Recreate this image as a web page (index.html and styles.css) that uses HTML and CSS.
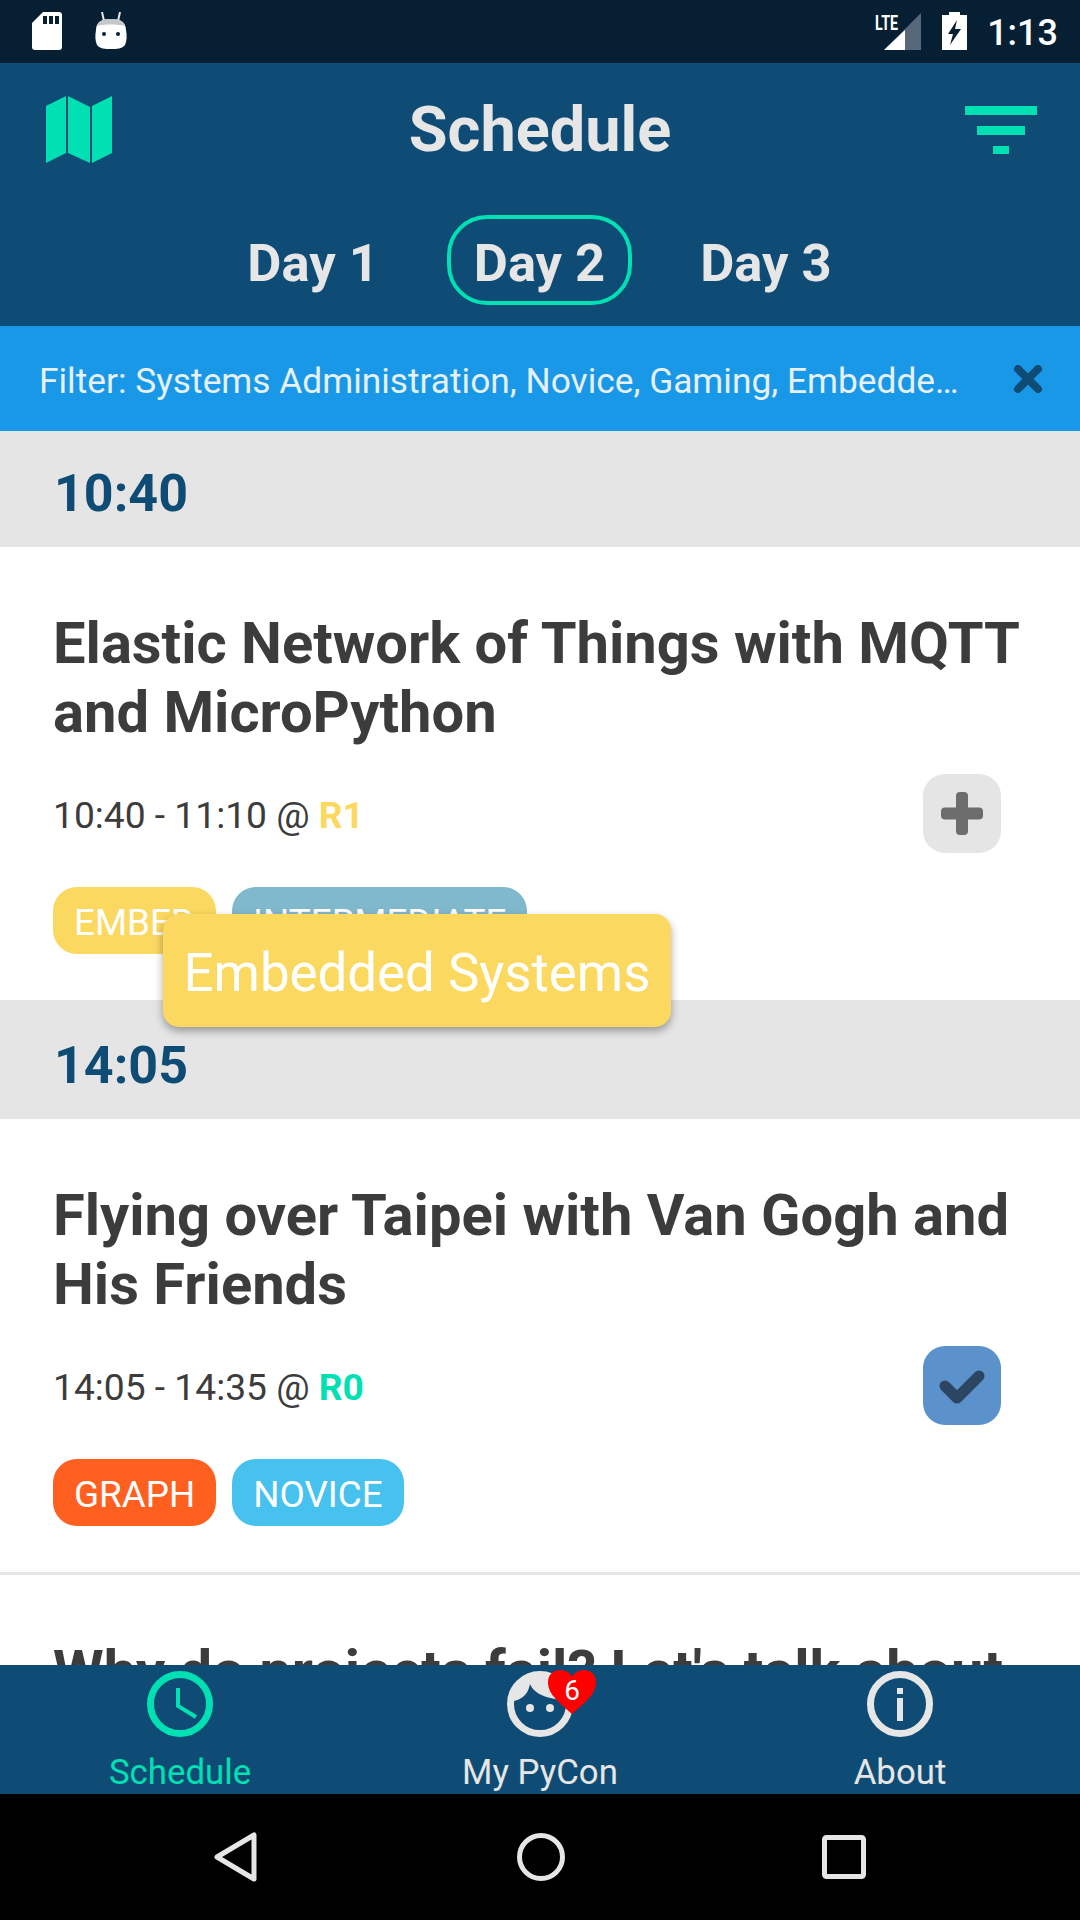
FILE: index.html
```html
<!DOCTYPE html>
<html lang="en">
<head>
    <meta charset="UTF-8">
    <meta name="viewport" content="width=device-width, initial-scale=1.0">
    <title>Schedule</title>
    <link rel="stylesheet" href="styles.css">
</head>
<body>
    <div class="screen">
        <div class="status-bar">
            <div class="status-left">
                <svg class="sd-icon" width="30" height="38" viewBox="0 0 30 38">
                    <path d="M11 0H27a3 3 0 0 1 3 3V35a3 3 0 0 1-3 3H3a3 3 0 0 1-3-3V11Z" fill="#fff"/>
                    <rect x="11" y="4" width="4" height="8" fill="#071f33"/>
                    <rect x="17" y="4" width="4" height="8" fill="#071f33"/>
                    <rect x="23" y="4" width="4" height="8" fill="#071f33"/>
                </svg>
                <svg class="android-icon" width="32" height="38" viewBox="0 0 32 38">
                    <path d="M7 0 9 9M25 0 23 9" stroke="#e8e8e8" stroke-width="2" fill="none"/>
                    <path d="M1 18C1 10 7 7 16 7S31 10 31 18C32 24 32 28 30 33 27 37 22 37 16 37S5 37 2 33C0 28 0 24 1 18Z" fill="#fff"/>
                    <path d="M2 14C3 9 8 7 16 7S29 9 30 14C24 12 8 12 2 14Z" fill="#c3c8cc"/>
                    <circle cx="9" cy="22" r="2" fill="#071f33"/>
                    <circle cx="23" cy="22" r="2" fill="#071f33"/>
                </svg>
            </div>
            <div class="status-right">
                <svg class="signal-icon" width="47" height="38" viewBox="0 0 47 38">
                    <path d="M47 1V38H10Z" fill="#56687a"/>
                    <path d="M31 18V38H10Z" fill="#fff"/>
                    <text class="lte-text" x="1" y="18" textLength="23" lengthAdjust="spacingAndGlyphs">LTE</text>
                </svg>
                <svg class="battery-icon" width="25" height="38" viewBox="0 0 25 38">
                    <path d="M7 0H18V3H25V38H0V3H7Z" fill="#fff"/>
                    <path d="M15 8 6 22H11L8 33 19 17H13Z" fill="#071f33"/>
                </svg>
                <span class="clock">1:13</span>
            </div>
        </div>

        <div class="header">
            <div class="header-top">
                <svg class="map-icon" width="66" height="67" viewBox="0 0 66 67">
                    <path d="M0 10 20 0V57L0 67ZM22 0 44 11V67L22 57ZM46 10 66 0V57L46 67Z" fill="#00e0b3"/>
                </svg>
                <h1 class="page-title">Schedule</h1>
                <svg class="filter-icon" width="72" height="48" viewBox="0 0 72 48">
                    <rect x="0" y="0" width="72" height="9" fill="#00e0b3"/>
                    <rect x="12" y="20" width="48" height="9" fill="#00e0b3"/>
                    <rect x="28" y="40" width="16" height="8" fill="#00e0b3"/>
                </svg>
            </div>
            <div class="day-tabs">
                <span class="day-tab">Day 1</span>
                <span class="day-tab active">Day 2</span>
                <span class="day-tab">Day 3</span>
            </div>
        </div>

        <div class="filter-bar">
            <span class="filter-text">Filter: Systems Administration, Novice, Gaming, Embedded Systems, Web</span>
            <svg class="filter-close" width="30" height="28" viewBox="0 0 30 28">
                <path d="M5 4 25 24M25 4 5 24" stroke="#0f4c75" stroke-width="8" stroke-linecap="round" fill="none"/>
            </svg>
        </div>

        <div class="schedule">
            <div class="time-head first">10:40</div>
            <div class="talk">
                <div class="talk-title">Elastic Network of Things with MQTT and MicroPython</div>
                <div class="talk-meta">
                    <span class="talk-time">10:40 - 11:10 @ <b class="room-r1">R1</b></span>
                    <span class="fav-btn">
                        <svg width="42" height="43" viewBox="0 0 42 43">
                            <rect x="15" y="0" width="12" height="43" rx="4" fill="#6d6d6d"/>
                            <rect x="0" y="15.5" width="42" height="12" rx="4" fill="#6d6d6d"/>
                        </svg>
                    </span>
                </div>
                <div class="tags">
                    <span class="tag tag-embed">EMBED</span>
                    <span class="tag tag-intermediate">INTERMEDIATE</span>
                </div>
            </div>
            <div class="time-head">14:05</div>
            <div class="talk bordered">
                <div class="talk-title">Flying over Taipei with Van Gogh and His Friends</div>
                <div class="talk-meta">
                    <span class="talk-time">14:05 - 14:35 @ <b class="room-r0">R0</b></span>
                    <span class="fav-btn checked">
                        <svg width="48" height="40" viewBox="0 0 48 40">
                            <path d="M7 20 19 32 41 10" stroke="#2c4562" stroke-width="11" stroke-linecap="round" stroke-linejoin="round" fill="none"/>
                        </svg>
                    </span>
                </div>
                <div class="tags">
                    <span class="tag tag-graph">GRAPH</span>
                    <span class="tag tag-novice">NOVICE</span>
                </div>
            </div>
            <div class="talk">
                <div class="talk-title">Why do projects fail? Let's talk about</div>
            </div>
            <div class="tooltip">Embedded Systems</div>
        </div>

        <div class="tab-bar">
            <div class="tab active">
                <svg width="66" height="66" viewBox="0 0 66 66">
                    <circle cx="33" cy="33" r="29.5" stroke="#00e0b3" stroke-width="7" fill="none"/>
                    <path d="M31 17V35L49 46" stroke="#00e0b3" stroke-width="4" fill="none"/>
                </svg>
                <span class="tab-label">Schedule</span>
            </div>
            <div class="tab">
                <div class="face-wrap">
                    <svg width="66" height="66" viewBox="0 0 66 66">
                        <circle cx="33" cy="33" r="29.5" stroke="#e6e6e6" stroke-width="7" fill="none"/>
                        <path d="M6 30C14 29 21 24 23 13 27 22 36 27 60 30V14L45 4H20L6 14Z" fill="#e6e6e6"/>
                        <circle cx="23" cy="37" r="4" fill="#e6e6e6"/>
                        <circle cx="43" cy="37" r="4" fill="#e6e6e6"/>
                    </svg>
                    <svg class="heart" width="48" height="44" viewBox="0 0 48 44">
                        <path d="M24 44C12 33 0 25 0 12 0 4 6 0 12 0 18 0 22 3 24 7 26 3 30 0 36 0 42 0 48 4 48 12 48 25 36 33 24 44Z" fill="#ff0000"/>
                    </svg>
                    <span class="heart-count">6</span>
                </div>
                <span class="tab-label">My PyCon</span>
            </div>
            <div class="tab">
                <svg width="66" height="66" viewBox="0 0 66 66">
                    <circle cx="33" cy="33" r="29.5" stroke="#e6e6e6" stroke-width="7" fill="none"/>
                    <rect x="30" y="17" width="6" height="6" fill="#e6e6e6"/>
                    <rect x="30" y="27" width="6" height="23" fill="#e6e6e6"/>
                </svg>
                <span class="tab-label">About</span>
            </div>
        </div>

        <div class="nav-bar">
            <svg width="46" height="52" viewBox="0 0 46 52">
                <path d="M41 4V48L4 26Z" stroke="#e6e6e6" stroke-width="5" stroke-linejoin="round" fill="none"/>
            </svg>
            <svg width="48" height="48" viewBox="0 0 48 48">
                <circle cx="24" cy="24" r="21.5" stroke="#e6e6e6" stroke-width="5" fill="none"/>
            </svg>
            <svg width="44" height="44" viewBox="0 0 44 44">
                <rect x="2.5" y="2.5" width="39" height="39" rx="2" stroke="#e6e6e6" stroke-width="5" fill="none"/>
            </svg>
        </div>
    </div>
</body>
</html>
```

FILE: styles.css
```css
* {
    box-sizing: border-box;
}
body {
    margin: 0;
    font-family: Roboto, "Noto Sans", sans-serif;
    color: #3c3c3c;
    background: #fff;
}
svg {
    display: block;
    flex: none;
}
.screen {
    width: 1080px;
    height: 1920px;
    display: flex;
    flex-direction: column;
    overflow: hidden;
}

/* status bar */
.status-bar {
    height: 63px;
    flex: none;
    display: flex;
    justify-content: space-between;
    align-items: flex-start;
    padding: 12px 22px 0 32px;
    background: #071f33;
}
.status-left {
    display: flex;
    gap: 33px;
}
.status-right {
    display: flex;
    align-items: flex-start;
    margin-left: auto;
}
.lte-text {
    font-size: 21px;
    font-weight: 700;
    fill: #fff;
}
.battery-icon {
    margin-left: 21px;
}
.clock {
    margin-left: 20px;
    font-size: 36px;
    font-weight: 500;
    line-height: 42px;
    color: #fff;
}

/* header */
.header {
    height: 263px;
    flex: none;
    background: #0f4c75;
    padding: 33px 43px 0 46px;
}
.header-top {
    display: flex;
    justify-content: space-between;
    align-items: center;
    height: 67px;
}
.page-title {
    margin: 0 0 0 3px;
    font-size: 63px;
    font-weight: 700;
    color: #e6e6e6;
}
.day-tabs {
    display: flex;
    justify-content: center;
    align-items: center;
    gap: 41px;
    margin: 52px 4px 0 0;
}
.day-tab {
    height: 90px;
    padding: 0 23px;
    border: 4px solid transparent;
    border-radius: 40px;
    font-size: 52.5px;
    font-weight: 700;
    line-height: 88px;
    color: #e6e6e6;
}
.day-tab.active {
    border-color: #00e0b3;
}

/* filter */
.filter-bar {
    height: 105px;
    flex: none;
    display: flex;
    align-items: center;
    justify-content: space-between;
    padding: 0 37px 0 39px;
    background: #1898e6;
}
.filter-text {
    width: 925px;
    padding-top: 4px;
    font-size: 35.3px;
    color: #e6f0f7;
    white-space: nowrap;
    overflow: hidden;
    text-overflow: ellipsis;
}

/* list */
.schedule {
    flex: 1;
    position: relative;
    overflow: hidden;
}
.time-head {
    height: 119px;
    display: flex;
    align-items: center;
    padding: 12px 0 0 54px;
    background: #e5e5e5;
    font-size: 52px;
    font-weight: 700;
    color: #0f4c75;
}
.time-head.first {
    height: 116px;
    padding-top: 8px;
}
.talk {
    padding: 62px 54px 46px 53px;
    background: #fff;
}
.talk.bordered {
    border-bottom: 3px solid #e5e5e5;
}
.talk-title {
    font-size: 57.9px;
    font-weight: 700;
    line-height: 69px;
}
.talk-meta {
    display: flex;
    justify-content: space-between;
    align-items: center;
    margin-top: 27px;
    padding-right: 25px;
}
.talk-time {
    padding-top: 3px;
    font-size: 37.2px;
}
.talk-time b {
    font-weight: 700;
}
.room-r1 {
    color: #fbd860;
}
.room-r0 {
    color: #00e0b3;
}
.fav-btn {
    width: 78px;
    height: 79px;
    display: flex;
    align-items: center;
    justify-content: center;
    border-radius: 22px;
    background: #e5e5e5;
}
.fav-btn.checked {
    background: #5c92cc;
}
.tags {
    display: flex;
    gap: 16px;
    margin-top: 34px;
}
.tag {
    height: 67px;
    padding: 0 21px;
    border-radius: 24px;
    font-size: 36.8px;
    line-height: 71px;
    color: #fff;
}
.tag-embed {
    background: #fbd860;
}
.tag-intermediate {
    background: #81b9cc;
}
.tag-graph {
    background: #ff6020;
}
.tag-novice {
    background: #47c1ee;
}
.tooltip {
    position: absolute;
    left: 163px;
    top: 483px;
    width: 508px;
    height: 113px;
    border-radius: 16px;
    background: #fbd860;
    box-shadow: 0 4px 8px rgba(0, 0, 0, 0.35);
    font-size: 52.8px;
    line-height: 118px;
    text-align: center;
    white-space: nowrap;
    color: #fff;
}

/* bottom tabs */
.tab-bar {
    height: 129px;
    flex: none;
    display: grid;
    grid-template-columns: repeat(3, 360px);
    background: #0f4c75;
}
.tab {
    display: flex;
    flex-direction: column;
    align-items: center;
    padding-top: 6px;
    color: #e6e6e6;
}
.tab.active {
    color: #00e0b3;
}
.tab-label {
    margin-top: 15px;
    font-size: 34.8px;
    line-height: 40px;
}
.face-wrap {
    position: relative;
}
.heart {
    position: absolute;
    left: 41px;
    top: -1px;
}
.heart-count {
    position: absolute;
    left: 55px;
    top: 4px;
    width: 20px;
    font-size: 28px;
    line-height: 32px;
    text-align: center;
    color: #fff;
}

/* android nav */
.nav-bar {
    height: 126px;
    flex: none;
    display: flex;
    align-items: center;
    justify-content: space-between;
    padding: 0 214px 0 213px;
    background: #000;
}
```
